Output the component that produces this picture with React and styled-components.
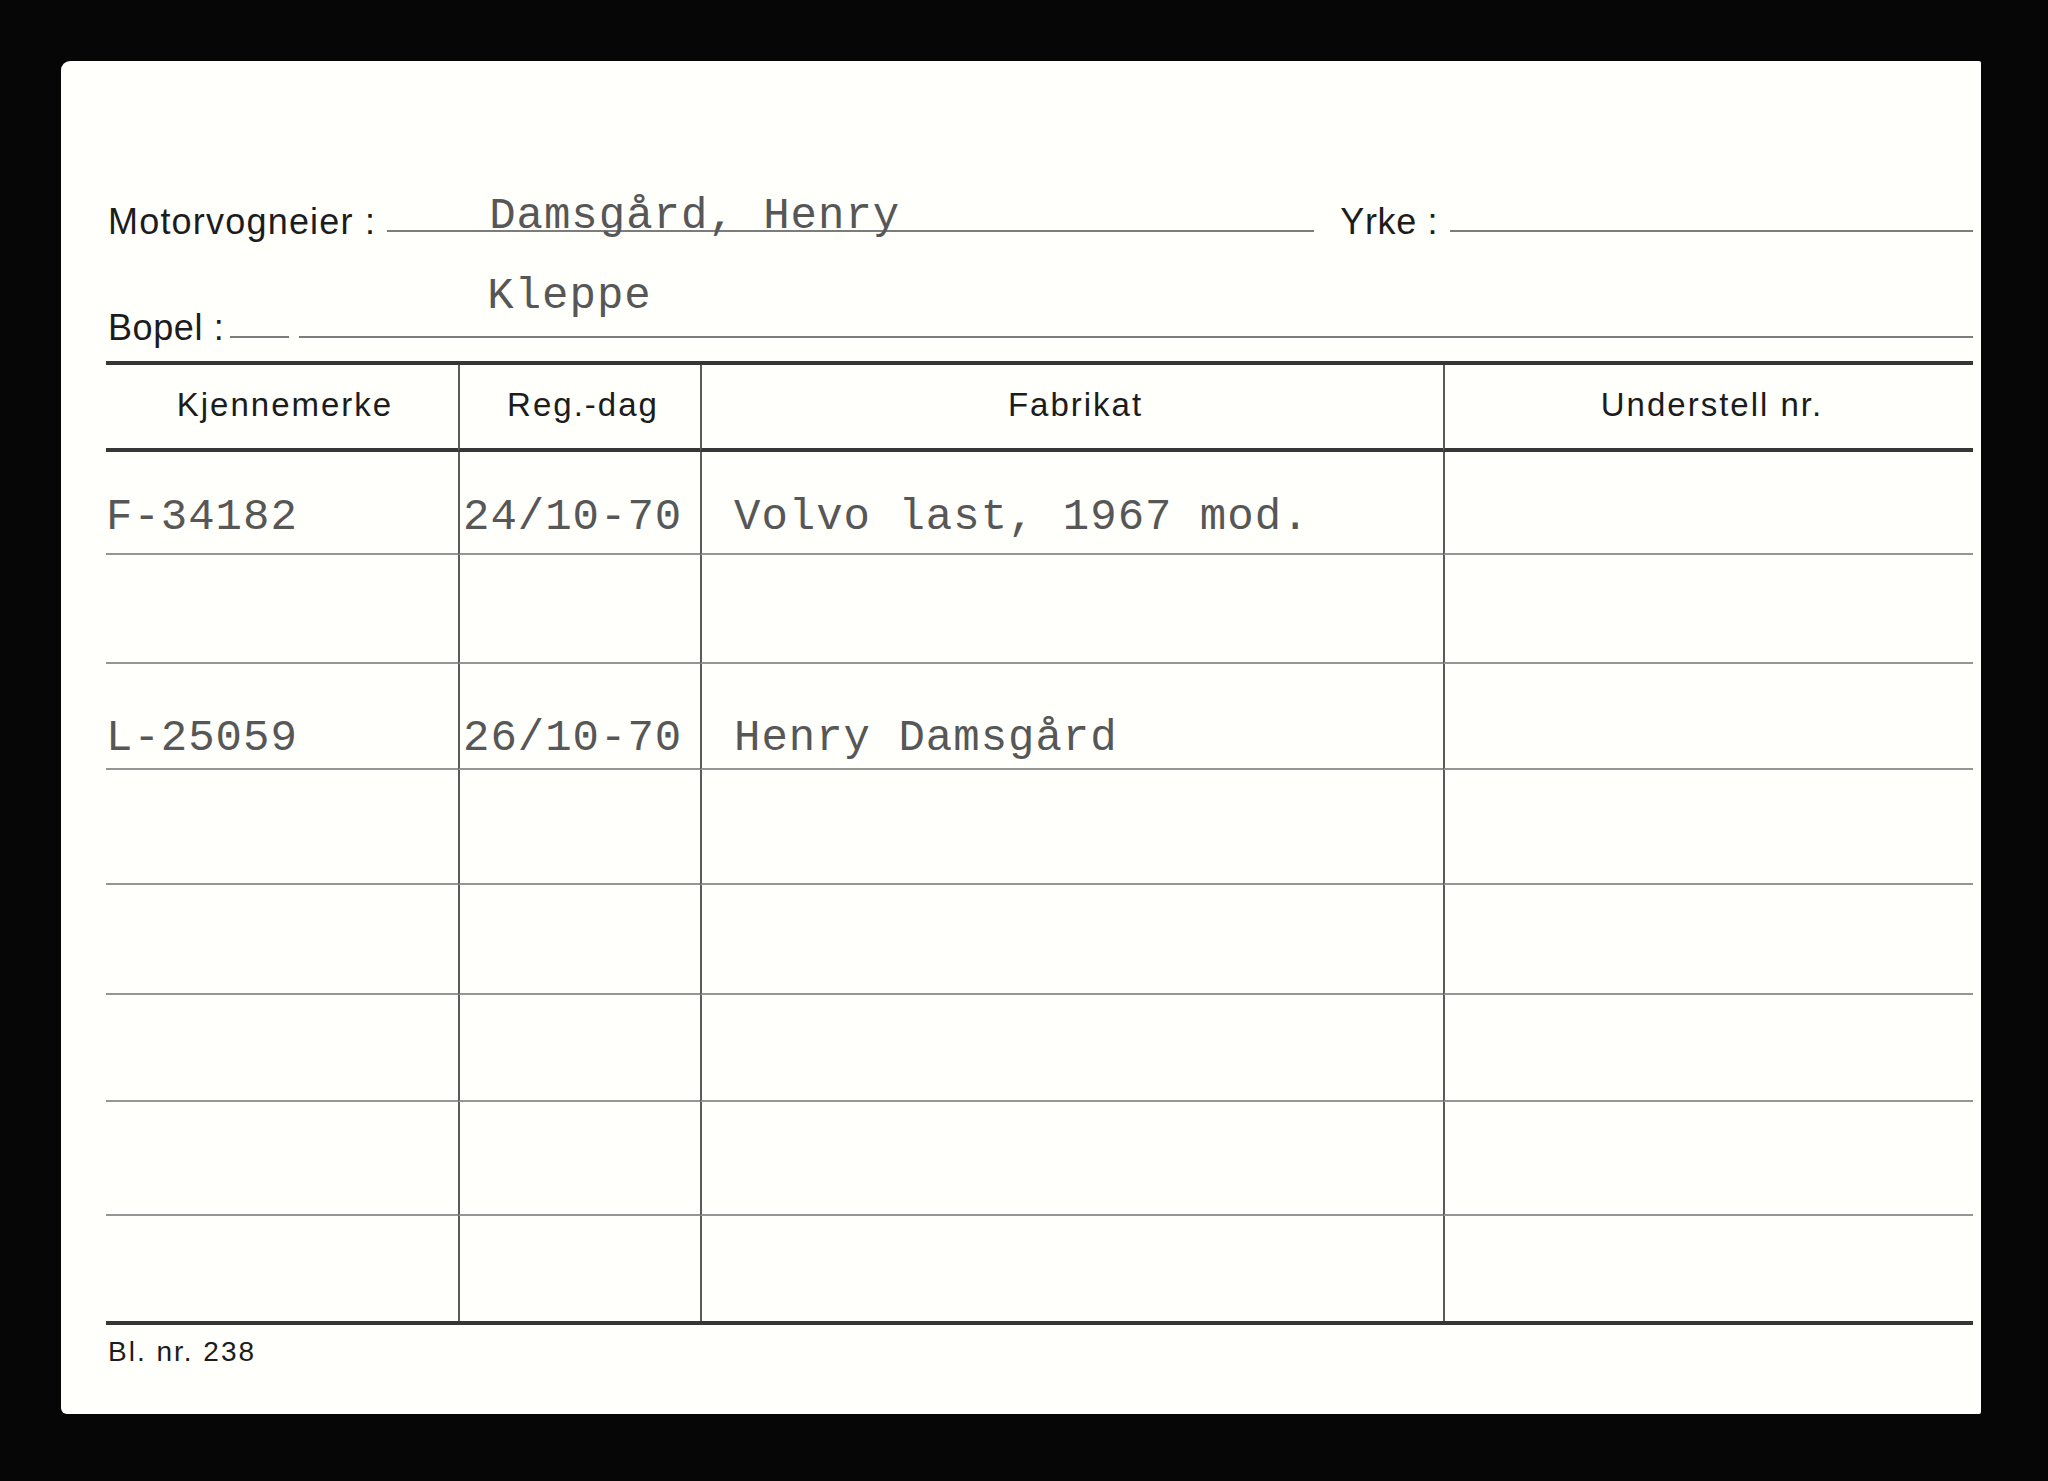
import React from 'react';
import styled, { createGlobalStyle } from 'styled-components';

const GlobalStyle = createGlobalStyle`
  html, body {
    margin: 0;
    padding: 0;
    background: #060606;
  }
  body {
    width: 2048px;
    height: 1481px;
    overflow: hidden;
  }
`;

const columns = [
  { title: 'Kjennemerke', width: 352, indent: 0 },
  { title: 'Reg.-dag', width: 242, indent: 3 },
  { title: 'Fabrikat', width: 743, indent: 32 },
  { title: 'Understell nr.', width: 530, indent: 0 },
];

const rows = [
  { h: 103, lift: 14, cells: ['F-34182', '24/10-70', 'Volvo last, 1967 mod.', ''] },
  { h: 109, cells: [] },
  { h: 106, lift: 8, cells: ['L-25059', '26/10-70', 'Henry Damsgård', ''] },
  { h: 115, cells: [] },
  { h: 110, cells: [] },
  { h: 107, cells: [] },
  { h: 114, cells: [] },
  { h: 105, cells: [], last: true },
];

const Card = () => (
  <>
    <GlobalStyle />
    <Page>
      <Sheet>
        <FieldRow>
          <Label $left={2} $gap={11} $track={1.2}>Motorvogneier :</Label>
          <Field $indent={102}>
            <Typed $lift={-8}>Damsgård, Henry</Typed>
          </Field>
          <Label $left={26} $gap={12}>Yrke :</Label>
          <Field $width={523} />
        </FieldRow>

        <FieldRow $top={42}>
          <Label $left={2} $gap={6}>Bopel :</Label>
          <Field $indent={257} $broken={[59, 69]}>
            <Typed $lift={18}>Kleppe</Typed>
          </Field>
        </FieldRow>

        <Table>
          {columns.map((col, i) => (
            <HeadCell key={col.title} $first={i === 0}>
              <HeadLabel>{col.title}</HeadLabel>
            </HeadCell>
          ))}
          {rows.map((row, r) =>
            columns.map((col, i) => (
              <Cell
                key={`${r}-${i}`}
                $h={row.h}
                $first={i === 0}
                $last={row.last}
                $indent={col.indent}
              >
                {row.cells[i] ? <Typed $lift={row.lift}>{row.cells[i]}</Typed> : null}
              </Cell>
            ))
          )}
        </Table>

        <FormNo>Bl. nr. 238</FormNo>
      </Sheet>
    </Page>
  </>
);

const Page = styled.div`
  width: 2048px;
  height: 1481px;
  box-sizing: border-box;
  padding: 61px 0 0 61px;
  background: #060606;
`;

const Sheet = styled.div`
  width: 1920px;
  height: 1353px;
  box-sizing: border-box;
  padding: 130px 8px 0 45px;
  background: #fffffc;
  border-radius: 9px 2px 2px 6px;
  display: flex;
  flex-direction: column;
`;

const FieldRow = styled.div`
  display: flex;
  align-items: flex-end;
  margin-top: ${({ $top }) => $top || 0}px;
`;

const Label = styled.span`
  font-family: "Liberation Sans", Arial, sans-serif;
  font-size: 36px;
  line-height: 36px;
  letter-spacing: ${({ $track }) => $track || 0.6}px;
  color: #1c1c1c;
  white-space: nowrap;
  margin: 0 ${({ $gap }) => $gap || 0}px -8px ${({ $left }) => $left || 0}px;
`;

const lineColor = '#7c7c7c';

const Field = styled.div`
  flex: ${({ $width }) => ($width ? `0 0 ${$width}px` : '1')};
  display: flex;
  align-items: flex-end;
  height: ${({ $width }) => ($width ? '41px' : 'auto')};
  box-sizing: border-box;
  padding: 0 0 2px ${({ $indent }) => $indent || 0}px;
  background: ${({ $broken }) =>
    $broken
      ? `linear-gradient(to right, ${lineColor} 0 ${$broken[0]}px, transparent ${$broken[0]}px ${$broken[1]}px, ${lineColor} ${$broken[1]}px) left bottom / 100% 2px no-repeat`
      : `linear-gradient(${lineColor}, ${lineColor}) left bottom / 100% 2px no-repeat`};
`;

const Typed = styled.span`
  font-family: "Liberation Mono", "Courier New", monospace;
  font-size: 44px;
  line-height: 44px;
  letter-spacing: 1px;
  color: #575757;
  white-space: nowrap;
  margin-bottom: ${({ $lift }) => ($lift === undefined ? -5 : $lift)}px;
`;

const Table = styled.div`
  margin-top: 23px;
  display: grid;
  grid-template-columns: ${columns.map((c) => `${c.width}px`).join(' ')};
  border-top: 4px solid #363636;
  border-bottom: 4px solid #363636;
`;

const HeadCell = styled.div`
  height: 87px;
  box-sizing: border-box;
  display: flex;
  justify-content: center;
  align-items: flex-start;
  padding: 23px 0 0 6px;
  border-bottom: 4px solid #363636;
  border-left: ${({ $first }) => ($first ? 'none' : '2px solid #5a5a5a')};
`;

const HeadLabel = styled.span`
  font-family: "Liberation Sans", Arial, sans-serif;
  font-size: 33px;
  line-height: 33px;
  letter-spacing: 2px;
  color: #1c1c1c;
  white-space: nowrap;
`;

const Cell = styled.div`
  height: ${({ $h }) => $h}px;
  box-sizing: border-box;
  display: flex;
  align-items: flex-end;
  padding-left: ${({ $indent }) => $indent}px;
  border-left: ${({ $first }) => ($first ? 'none' : '2px solid #5a5a5a')};
  border-bottom: ${({ $last }) => ($last ? 'none' : '2px solid #959595')};
`;

const FormNo = styled.div`
  margin: 13px 0 0 2px;
  font-family: "Liberation Sans", Arial, sans-serif;
  font-size: 28px;
  line-height: 28px;
  letter-spacing: 2px;
  color: #1c1c1c;
`;

export default Card;
